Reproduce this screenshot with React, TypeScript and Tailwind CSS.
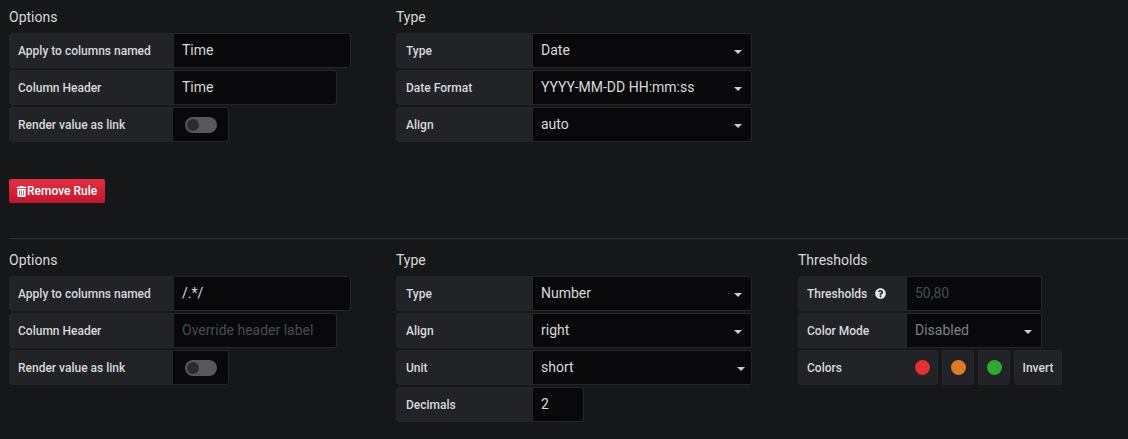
import { FaTrashAlt, FaQuestionCircle } from "react-icons/fa"

const labelClass =
  "flex items-center shrink-0 h-full bg-[#212327] border border-[#262628] rounded-l-[3px] text-xs font-medium text-[#d8d9da]"

function Caret({ className = "" }: { className?: string }) {
  return (
    <svg width="8" height="4" viewBox="0 0 8 4" className={`absolute top-[16px] text-[#c7d0d9] ${className}`}>
      <path d="M0 0h8L4 4z" fill="currentColor" />
    </svg>
  )
}

function Field({
  label,
  labelWidth,
  labelPad = "pl-[8px]",
  width,
  value,
  valueColor = "text-[#d8d9da]",
  select,
  caretClass = "right-[9px]",
  hint,
}: {
  label: string
  labelWidth: string
  labelPad?: string
  width: string
  value: string
  valueColor?: string
  select?: boolean
  caretClass?: string
  hint?: boolean
}) {
  return (
    <div className={`flex h-[35px] ${width}`}>
      <div className={`${labelClass} ${labelPad} ${labelWidth}`}>
        {label}
        {hint && <FaQuestionCircle className="ml-[8px] text-[11px] text-[#e9edf2]" />}
      </div>
      <div
        className={`relative flex flex-1 items-center pl-[8px] pb-[2px] bg-[#09090b] border border-[#262628] border-l-0 rounded-r-[3px] text-sm ${valueColor}`}
      >
        {value}
        {select && <Caret className={caretClass} />}
      </div>
    </div>
  )
}

function Toggle() {
  return (
    <div className="flex h-[35px] w-[220px]">
      <div className={`${labelClass} pl-[8px] w-[164px]`}>Render value as link</div>
      <div className="flex flex-1 items-center pl-[12px] bg-[#09090b] border border-[#262628] border-l-0 rounded-r-[3px]">
        <div className="flex items-center w-[32px] h-[16px] pl-[2px] rounded-full bg-[#585858]">
          <div className="w-[12px] h-[12px] rounded-full bg-[#2a2b2e]" />
        </div>
      </div>
    </div>
  )
}

function Heading({ children }: { children: string }) {
  return <div className="flex items-center h-[33px] text-sm text-[#d8d9da]">{children}</div>
}

function Swatch({ color }: { color: string }) {
  return (
    <div className="flex items-center justify-center w-[32px] h-full bg-[#212327] border border-[#262628] rounded-r-[3px]">
      <div className={`w-[15px] h-[15px] rounded-full ${color}`} />
    </div>
  )
}

function OptionsColumn({ second }: { second?: boolean }) {
  return (
    <div className="w-[387px] shrink-0">
      <Heading>Options</Heading>
      <div className="flex flex-col gap-[2px]">
        <Field label="Apply to columns named" labelWidth="w-[165px]" width="w-[342px]" value={second ? "/.*/" : "Time"} />
        <Field
          label="Column Header"
          labelWidth="w-[165px]"
          width="w-[328px]"
          value={second ? "Override header label" : "Time"}
          valueColor={second ? "text-[#464c54]" : undefined}
        />
        <Toggle />
      </div>
    </div>
  )
}

export default function App() {
  return (
    <div className="w-[1128px] h-[439px] overflow-hidden pl-[9px] bg-[#161719] font-['Roboto',sans-serif]">
      <div className="flex">
        <OptionsColumn />
        <div>
          <Heading>Type</Heading>
          <div className="flex flex-col gap-[2px]">
            <Field label="Type" labelPad="pl-[9px]" labelWidth="w-[137px]" width="w-[356px]" value="Date" select />
            <Field label="Date Format" labelPad="pl-[9px]" labelWidth="w-[137px]" width="w-[356px]" value="YYYY-MM-DD HH:mm:ss" select />
            <Field label="Align" labelPad="pl-[9px]" labelWidth="w-[137px]" width="w-[356px]" value="auto" select />
          </div>
        </div>
      </div>

      <button className="flex items-center h-[24px] w-[96px] mt-[37px] pl-[7px] rounded-[2px] bg-gradient-to-b from-[#e02f44] to-[#c4162a] text-xs font-medium text-white">
        <FaTrashAlt className="text-[11px] shrink-0" />
        Remove Rule
      </button>

      <div className="h-px mt-[35px] bg-[#2f3034]" />

      <div className="flex pt-[4px]">
        <OptionsColumn second />
        <div className="w-[402px] shrink-0">
          <Heading>Type</Heading>
          <div className="flex flex-col gap-[2px]">
            <Field label="Type" labelPad="pl-[9px]" labelWidth="w-[137px]" width="w-[356px]" value="Number" select />
            <Field label="Align" labelPad="pl-[9px]" labelWidth="w-[137px]" width="w-[356px]" value="right" select />
            <Field label="Unit" labelPad="pl-[9px]" labelWidth="w-[137px]" width="w-[356px]" value="short" select caretClass="right-[6px]" />
            <Field label="Decimals" labelPad="pl-[9px]" labelWidth="w-[137px]" width="w-[188px]" value="2" />
          </div>
        </div>
        <div>
          <Heading>Thresholds</Heading>
          <div className="flex flex-col gap-[2px]">
            <Field label="Thresholds" labelWidth="w-[109px]" width="w-[244px]" value="50,80" valueColor="text-[#464c54]" hint />
            <Field
              label="Color Mode"
              labelWidth="w-[109px]"
              width="w-[244px]"
              value="Disabled"
              valueColor="text-[#7b8087]"
              select
            />
            <div className="flex h-[35px] gap-[4px]">
              <div className="flex h-full">
                <div className={`${labelClass} pl-[8px] w-[108px] border-r-0`}>Colors</div>
                <Swatch color="bg-[#e02f35]" />
              </div>
              <Swatch color="bg-[#dc7b29]" />
              <Swatch color="bg-[#2ea82f]" />
              <div className="flex items-center justify-center w-[48px] h-full bg-[#212327] border border-[#262628] rounded-l-[3px] text-xs font-medium text-[#d8d9da]">
                Invert
              </div>
            </div>
          </div>
        </div>
      </div>
    </div>
  )
}
